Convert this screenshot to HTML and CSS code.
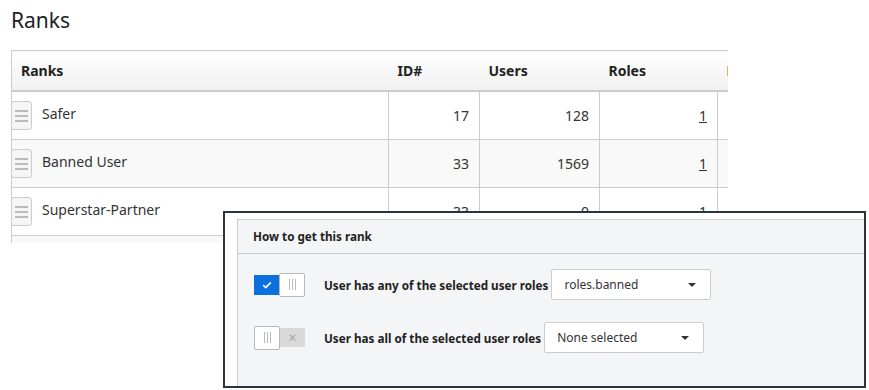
FILE: index.html
```html
<!DOCTYPE html>
<html lang="en">
<head>
    <meta charset="UTF-8">
    <title>Ranks</title>
    <link rel="stylesheet" href="styles.css">
</head>
<body>
    <h1 class="page-title">Ranks</h1>

    <div class="table-wrap">
        <table class="ranks">
            <colgroup>
                <col class="col-name">
                <col class="col-id">
                <col class="col-users">
                <col class="col-roles">
                <col class="col-more">
            </colgroup>
            <thead>
                <tr>
                    <th>Ranks</th>
                    <th>ID#</th>
                    <th>Users</th>
                    <th>Roles</th>
                    <th>Permissions</th>
                </tr>
            </thead>
            <tbody>
                <tr>
                    <td class="name"><span class="handle"><i></i><i></i><i></i></span>Safer</td>
                    <td class="num">17</td>
                    <td class="num">128</td>
                    <td class="num"><a href="#">1</a></td>
                    <td></td>
                </tr>
                <tr>
                    <td class="name"><span class="handle"><i></i><i></i><i></i></span>Banned User</td>
                    <td class="num">33</td>
                    <td class="num">1569</td>
                    <td class="num"><a href="#">1</a></td>
                    <td></td>
                </tr>
                <tr>
                    <td class="name"><span class="handle"><i></i><i></i><i></i></span>Superstar-Partner</td>
                    <td class="num">33</td>
                    <td class="num">0</td>
                    <td class="num"><a href="#">1</a></td>
                    <td></td>
                </tr>
                <tr>
                    <td class="name"><span class="handle"><i></i><i></i><i></i></span>Moderator</td>
                    <td class="num">12</td>
                    <td class="num">4</td>
                    <td class="num"><a href="#">2</a></td>
                    <td></td>
                </tr>
            </tbody>
        </table>
    </div>

    <!-- popup: how to get this rank -->
    <div class="popup">
        <div class="panel">
            <div class="panel-head">How to get this rank</div>
            <div class="panel-body">
                <div class="rule">
                    <span class="toggle on">
                        <span class="track">
                            <svg width="10" height="8" viewBox="0 0 10 8"><path d="M1.2 4.2 L3.8 6.6 L8.8 1.4" fill="none" stroke="#fff" stroke-width="1.6"/></svg>
                        </span>
                        <span class="knob"><i></i><i></i><i></i></span>
                    </span>
                    <span class="rule-label">User has any of the selected user roles</span>
                    <span class="select">roles.banned<b class="caret"></b></span>
                </div>
                <div class="rule">
                    <span class="toggle off">
                        <span class="knob"><i></i><i></i><i></i></span>
                        <span class="track">&times;</span>
                    </span>
                    <span class="rule-label">User has all of the selected user roles</span>
                    <span class="select">None selected<b class="caret"></b></span>
                </div>
            </div>
        </div>
    </div>
</body>
</html>
```

FILE: styles.css
```css
body {
    margin: 0;
    font-family: "Noto Sans", "Open Sans", sans-serif;
    color: #333;
    background-color: #fff;
    padding: 0 11px;
}
.page-title {
    font-size: 21px;
    font-weight: normal;
    color: #222;
    margin: 0;
    padding-top: 6px;
    line-height: 28px;
    height: 44px;
}
.table-wrap {
    width: 717px;
    height: 193px;
    overflow: hidden;
}
.ranks {
    border-collapse: collapse;
    table-layout: fixed;
    width: 850px;
    font-size: 14px;
    border-left: 1px solid #ccc;
}
.col-name { width: 377px; }
.col-id { width: 91px; }
.col-users { width: 120px; }
.col-roles { width: 118px; }
.col-more { width: 144px; }
.ranks th {
    text-align: left;
    font-weight: bold;
    color: #222;
    height: 39px;
    padding: 0 8px 0 9px;
    border-top: 1px solid #ccc;
    border-bottom: 2px solid #ccc;
    background: linear-gradient(#fff, #f0f0f0);
}
.ranks td {
    height: 47px;
    padding: 0 10px 0 9px;
    border-bottom: 1px solid #ccc;
    border-left: 1px solid #ccc;
    vertical-align: middle;
}
.ranks tbody tr:nth-child(even) {
    background-color: #f9f9f9;
}
.ranks td.name {
    border-left: none;
    padding-left: 0;
}
.ranks td.num {
    text-align: right;
}
.ranks a {
    color: #333;
}
.handle {
    display: inline-flex;
    flex-direction: column;
    justify-content: center;
    gap: 3px;
    width: 21px;
    height: 29px;
    box-sizing: border-box;
    padding: 0 3px;
    margin-left: -1px;
    margin-right: 10px;
    vertical-align: middle;
    border: 1px solid #ccc;
    border-radius: 3px;
    background-color: #f5f5f5;
}
.handle i {
    display: block;
    height: 2px;
    background-color: #bbb;
}

.popup {
    position: absolute;
    left: 223px;
    top: 211px;
    width: 627px;
    height: 167px;
    border: 2px solid #2b3240;
    background-color: #fff;
    overflow: hidden;
    padding: 6px 0 0 12px;
}
.popup .panel {
    border: 1px solid #ccc;
    background-color: #f4f5f7;
    height: 200px;
    width: 640px;
    font-size: 11.7px;
    color: #222;
}
.panel-head {
    font-weight: bold;
    height: 33px;
    line-height: 33px;
    padding-left: 15px;
    border-bottom: 1px solid #ccc;
}
.panel-body {
    padding: 15px 0 0 16px;
}
.rule {
    display: flex;
    align-items: center;
    height: 31px;
    margin-bottom: 22px;
}
.rule-label {
    font-weight: bold;
    margin-left: 19px;
    margin-right: 3px;
}
.toggle {
    display: inline-flex;
    align-items: center;
    width: 51px;
}
.toggle .track {
    width: 25px;
    height: 20px;
    display: flex;
    align-items: center;
    justify-content: center;
}
.toggle.on .track {
    background-color: #0b6fde;
}
.toggle.off .track {
    background-color: #d9d9d9;
    color: #a5a5a5;
    font-size: 14px;
    height: 19px;
}
.toggle .knob {
    width: 26px;
    height: 24px;
    box-sizing: border-box;
    border: 1px solid #b8b8b8;
    border-radius: 2px;
    background-color: #fff;
    display: flex;
    align-items: center;
    justify-content: center;
    gap: 2px;
}
.toggle .knob i {
    width: 1px;
    height: 11px;
    background-color: #bbb;
}
.select {
    position: relative;
    display: flex;
    align-items: center;
    width: 160px;
    height: 31px;
    box-sizing: border-box;
    border: 1px solid #ccc;
    border-radius: 2px;
    background-color: #fff;
    padding-left: 12px;
    color: #333;
    font-size: 12px;
}
.caret {
    position: absolute;
    right: 14px;
    top: 13px;
    border-left: 4px solid transparent;
    border-right: 4px solid transparent;
    border-top: 4px solid #333;
}
```
